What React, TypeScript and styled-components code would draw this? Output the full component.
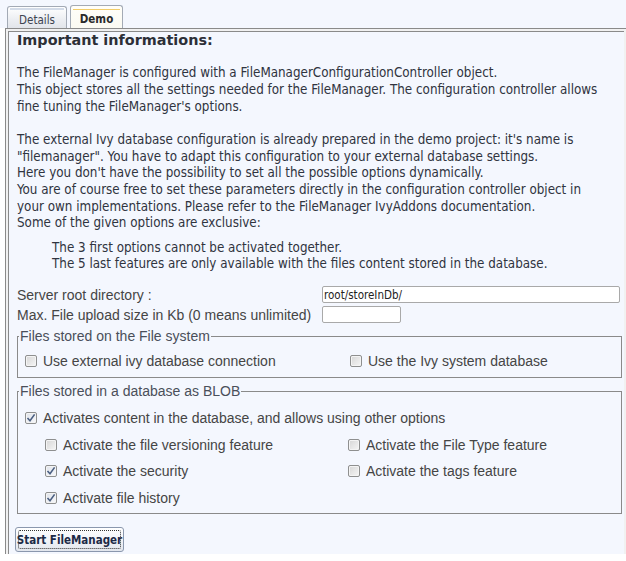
import React from 'react';
import styled, { createGlobalStyle } from 'styled-components';

const PALE = '#f4f7fe';
const TAHOMA = '"DejaVu Sans Condensed", "DejaVu Sans", sans-serif';
const ARIAL = '"Liberation Sans", Arial, sans-serif';

const Global = createGlobalStyle`
  html, body { margin: 0; padding: 0; background: #ffffff; }
  body { width: 626px; height: 561px; overflow: hidden; }
`;

const Page = styled.div`
  width: 626px;
`;

const TabBar = styled.div`
  display: flex;
  align-items: flex-end;
  gap: 3px;
  height: 28px;
  box-sizing: border-box;
  padding-left: 7px;
  background: ${PALE};
`;

const Tab = styled.div<{ $active?: boolean }>`
  position: relative;
  box-sizing: border-box;
  width: ${p => (p.$active ? 53 : 60)}px;
  height: ${p => (p.$active ? 23 : 22)}px;
  border: 1px solid #a3aab5;
  border-bottom: none;
  border-radius: 3px 3px 0 0;
  background: ${p =>
    p.$active
      ? 'linear-gradient(#fffef9, #fbfaf2)'
      : 'linear-gradient(#ffffff, #eceef2 60%, #e2e5ea)'};
  font-family: ${TAHOMA};
  font-size: 11.5px;
  font-weight: ${p => (p.$active ? 'bold' : 'normal')};
  color: ${p => (p.$active ? '#2a2a2a' : '#3e4450')};
  display: flex;
  align-items: center;
  justify-content: center;
  padding-top: 4px;
  &::before {
    content: '';
    position: absolute;
    left: 2px;
    right: 2px;
    top: ${p => (p.$active ? 3 : 1)}px;
    height: ${p => (p.$active ? 1 : 2)}px;
    background: ${p => (p.$active ? '#f2cd6a' : '#d3dbe8')};
  }
`;

const Panel = styled.div`
  margin-left: 5px;
  border-top: 1px solid #8a8a8a;
  border-left: 1px solid #8a8a8a;
  padding: 2px 0 0 2px;
  background: #f1f1f1;
`;

const Inner = styled.div`
  margin-right: 2px;
  border-top: 1px solid #8a8a8a;
  border-left: 1px solid #8a8a8a;
  background: ${PALE};
  padding: 0 2px 2px 8px;
`;

const Info = styled.div`
  font-family: ${TAHOMA};
  font-size: 13.3px;
  line-height: 16.67px;
  color: #30343f;
  white-space: nowrap;
`;

const Heading = styled.div`
  font-family: "DejaVu Sans", sans-serif;
  font-weight: bold;
  font-size: 14.4px;
  color: #2c2f37;
`;

const Para = styled.p`
  margin: 16.67px 0 0 0;
`;

const Notes = styled.div`
  margin: 7.5px 0 0 35px;
`;

const FormGrid = styled.div`
  display: grid;
  grid-template-columns: 305px 1fr;
  grid-auto-rows: 20px;
  align-items: center;
  margin-top: 12px;
  font-family: ${ARIAL};
  font-size: 14px;
  color: #454545;
  white-space: nowrap;
`;

const TextInput = styled.input<{ $w: number }>`
  box-sizing: border-box;
  width: ${p => p.$w}px;
  height: 17px;
  border: 1px solid #a9a9a9;
  border-radius: 2px;
  background: #fff;
  padding: 0 1px;
  font-family: ${TAHOMA};
  font-size: 11.5px;
  color: #222;
  outline: none;
`;

const Group = styled.fieldset<{ $mt: number; $pt: number }>`
  margin: ${p => p.$mt}px 0 0 0;
  padding: ${p => p.$pt}px 0 2.5px 7px;
  border: 1px solid #8a8a8a;
  min-width: 0;
  font-family: ${ARIAL};
  font-size: 14px;
  color: #454545;
`;

const Legend = styled.legend`
  padding: 0 1px;
  margin-left: -6px;
  line-height: 15px;
  color: #4a4f5a;
`;

const Cols = styled.div<{ $first: number; $indent?: number }>`
  display: grid;
  grid-template-columns: ${p => p.$first}px 1fr;
  padding-left: ${p => p.$indent ?? 0}px;
`;

const Check = styled.label`
  display: flex;
  align-items: center;
  gap: 6px;
  height: 26.5px;
  white-space: nowrap;
`;

const Box = styled.span<{ $on?: boolean }>`
  flex: none;
  box-sizing: border-box;
  width: 12px;
  height: 12px;
  border: 1px solid #8e8f8f;
  border-radius: 2px;
  background: ${p =>
    p.$on
      ? 'linear-gradient(135deg, #dfe3ea, #f7f8fb)'
      : 'linear-gradient(135deg, #d6d6d6, #f6f6f6)'};
  box-shadow: inset 0 0 0 1px #f4f4f4;
  display: flex;
  align-items: center;
  justify-content: center;
`;

const Button = styled.button`
  margin: 13px 0 0 -2px;
  box-sizing: border-box;
  width: 109px;
  height: 25px;
  border: 1px solid #8a97ad;
  border-radius: 3px;
  background: linear-gradient(#ffffff, #f3f5f9 45%, #e2e6ed);
  font-family: ${TAHOMA};
  font-size: 11.5px;
  font-weight: bold;
  color: #1d2a47;
  padding: 0;
  position: relative;
  &::after {
    content: '';
    position: absolute;
    inset: 2px;
    border: 1px dotted #333;
    border-radius: 2px;
  }
`;

function CheckItem({ label, on }: { label: string; on?: boolean }) {
  return (
    <Check>
      <Box $on={on}>
        {on && (
          <svg width="10" height="10" viewBox="0 0 10 10">
            <path d="M1.5 5 L4 7.8 L8.6 1.4" fill="none" stroke="#4b5f82" strokeWidth="1.6" />
          </svg>
        )}
      </Box>
      {label}
    </Check>
  );
}

export default function App() {
  return (
    <Page>
      <Global />
      <TabBar>
        <Tab>Details</Tab>
        <Tab $active>Demo</Tab>
      </TabBar>
      <Panel>
        <Inner>
          <Info>
            <Heading>Important informations:</Heading>
            <Para>
              The FileManager is configured with a FileManagerConfigurationController object.<br />
              This object stores all the settings needed for the FileManager. The configuration controller allows<br />
              fine tuning the FileManager's options.
            </Para>
            <Para>
              The external Ivy database configuration is already prepared in the demo project: it's name is<br />
              "filemanager". You have to adapt this configuration to your external database settings.<br />
              Here you don't have the possibility to set all the possible options dynamically.<br />
              You are of course free to set these parameters directly in the configuration controller object in<br />
              your own implementations. Please refer to the FileManager IvyAddons documentation.<br />
              Some of the given options are exclusive:
            </Para>
            <Notes>
              The 3 first options cannot be activated together.<br />
              The 5 last features are only available with the files content stored in the database.
            </Notes>
          </Info>
          <FormGrid>
            <span>Server root directory :</span>
            <TextInput $w={298} defaultValue="root/storeInDb/" />
            <span>Max. File upload size in Kb (0 means unlimited)</span>
            <TextInput $w={79} defaultValue="" />
          </FormGrid>
          <Group $mt={4} $pt={4}>
            <Legend>Files stored on the File system</Legend>
            <Cols $first={325}>
              <CheckItem label="Use external ivy database connection" />
              <CheckItem label="Use the Ivy system database" />
            </Cols>
          </Group>
          <Group $mt={6} $pt={6}>
            <Legend>Files stored in a database as BLOB</Legend>
            <CheckItem on label="Activates content in the database, and allows using other options" />
            <Cols $first={303} $indent={20}>
              <CheckItem label="Activate the file versioning feature" />
              <CheckItem label="Activate the File Type feature" />
              <CheckItem on label="Activate the security" />
              <CheckItem label="Activate the tags feature" />
              <CheckItem on label="Activate file history" />
            </Cols>
          </Group>
          <Button>Start FileManager</Button>
        </Inner>
      </Panel>
    </Page>
  );
}
